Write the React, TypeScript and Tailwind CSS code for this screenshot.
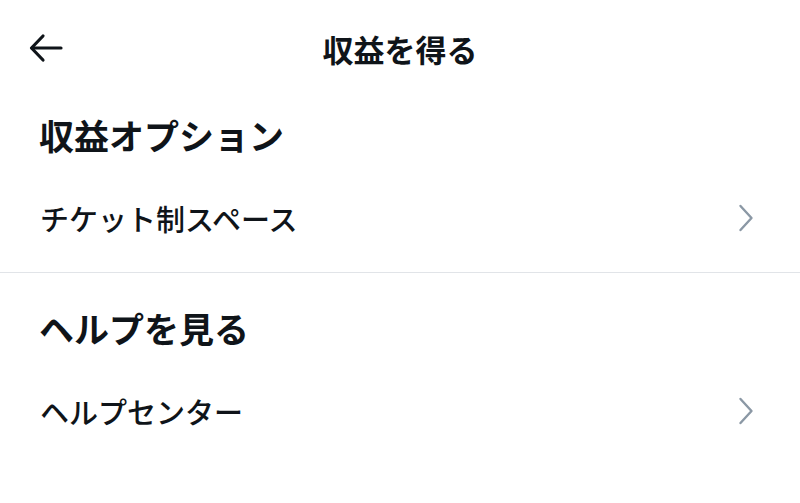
import React from "react";

const Chevron = () => (
  <svg width="16" height="28" viewBox="0 0 16 28" fill="none" className="shrink-0">
    <path d="M2.5 2 L13.5 14 L2.5 26" stroke="#8b98a5" strokeWidth="2.4" strokeLinecap="round" strokeLinejoin="round" />
  </svg>
);

const Row = ({ label }: { label: string }) => (
  <div className="flex h-[92px] items-center justify-between pl-[40px] pr-[46px]">
    <span className="text-[29px] leading-none font-medium text-[#0f1419]">{label}</span>
    <Chevron />
  </div>
);

const Heading = ({ label }: { label: string }) => (
  <div className="flex h-[76px] items-center pl-[39px]">
    <span className="text-[35px] leading-none font-bold text-[#0f1419]">{label}</span>
  </div>
);

export default function App() {
  return (
    <div
      className="w-[800px] h-[503px] overflow-hidden bg-white flex flex-col"
      style={{ fontFamily: '"Noto Sans CJK JP", "Noto Sans", sans-serif' }}
    >
      <div className="relative flex h-[96px] items-center justify-center shrink-0">
        <svg
          className="absolute left-[28px] top-[33px]"
          width="36"
          height="30"
          viewBox="0 0 36 30"
          fill="none"
        >
          <path d="M33 15 H4" stroke="#0f1419" strokeWidth="3.2" strokeLinecap="round" />
          <path d="M15 3 L3.5 15 L15 27" stroke="#0f1419" strokeWidth="3.2" strokeLinecap="round" strokeLinejoin="round" />
        </svg>
        <span className="text-[31px] leading-none font-bold text-[#0f1419]">収益を得る</span>
      </div>
      <Heading label="収益オプション" />
      <Row label="チケット制スペース" />
      <div className="mt-[8px] h-px bg-[#e1e4e8]" />
      <div className="pt-[16px]">
        <Heading label="ヘルプを見る" />
        <Row label="ヘルプセンター" />
      </div>
    </div>
  );
}
